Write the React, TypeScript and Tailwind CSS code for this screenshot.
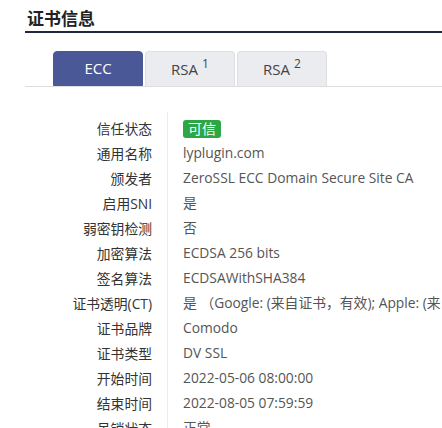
import React from "react";

const rows: { label: string; value: React.ReactNode }[] = [
  {
    label: "信任状态",
    value: (
      <span className="inline-flex h-[18px] items-center rounded-[3px] bg-[#2ba745] px-[5px] text-[14px] leading-none text-white">
        可信
      </span>
    ),
  },
  { label: "通用名称", value: "lyplugin.com" },
  { label: "颁发者", value: "ZeroSSL ECC Domain Secure Site CA" },
  { label: "启用SNI", value: "是" },
  { label: "弱密钥检测", value: "否" },
  { label: "加密算法", value: "ECDSA 256 bits" },
  { label: "签名算法", value: "ECDSAWithSHA384" },
  {
    label: "证书透明(CT)",
    value: "是 （Google: (来自证书，有效); Apple: (来自证书，有效)）",
  },
  { label: "证书品牌", value: "Comodo" },
  { label: "证书类型", value: "DV SSL" },
  { label: "开始时间", value: "2022-05-06 08:00:00" },
  { label: "结束时间", value: "2022-08-05 07:59:59" },
  { label: "吊销状态", value: "正常" },
];

const tabs = [
  { name: "ECC", sup: "" },
  { name: "RSA", sup: "1" },
  { name: "RSA", sup: "2" },
];

export default function App() {
  return (
    <div
      className="h-[428px] w-[442px] overflow-hidden bg-white text-[13.8px]"
      style={{ fontFamily: '"Open Sans", "Noto Sans CJK SC", sans-serif' }}
    >
      <div className="pl-[25px] pt-[7px]">
        <h2 className="border-b-[2px] border-[#1e2940] pl-[2px] text-[17px] font-bold leading-[24px] text-[#222]">
          证书信息
        </h2>

        <div className="mt-[18px] flex gap-[2px] border-b border-[#dcdcdc] pl-[28px]">
          {tabs.map((t, i) => (
            <div
              key={i}
              className={`flex h-[35px] w-[90px] items-center justify-center rounded-t-[4px] border text-[15px] ${
                i === 0
                  ? "border-[#4a5898] bg-[#4a5898] text-white"
                  : "border-[#dedfe3] border-b-0 bg-[#ebecf0] text-[#444]"
              }`}
            >
              {t.name}
              {t.sup && (
                <span className="relative -top-[5px] ml-[4px] text-[12px] text-[#444]">
                  {t.sup}
                </span>
              )}
            </div>
          ))}
        </div>
      </div>

      <div className="mt-[25px] flex whitespace-nowrap">
        <div className="w-[167px] shrink-0 pr-[15px] pt-[4px] text-right text-[#333]">
          {rows.map((r) => (
            <div key={r.label} className="h-[25px] leading-[25px]">
              {r.label}
            </div>
          ))}
        </div>
        <div className="border-l border-[#ececec] pl-[15px] pt-[4px] text-[#555]">
          {rows.map((r) => (
            <div key={r.label} className="flex h-[25px] items-center">
              {r.value}
            </div>
          ))}
        </div>
      </div>
    </div>
  );
}
